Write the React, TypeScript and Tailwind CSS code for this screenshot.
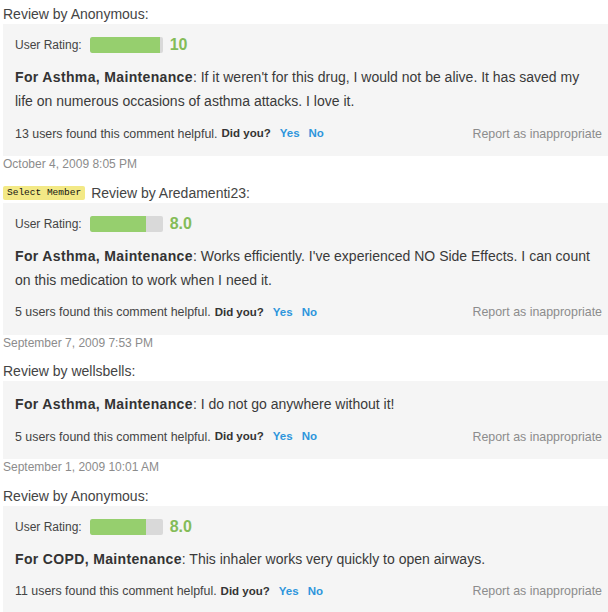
import React from 'react';

type Review = {
  author: string;
  selectMember?: boolean;
  rating?: number;
  ratingLabel?: string;
  condition: string;
  text: string;
  helpful: number;
  date?: string;
};

const reviews: Review[] = [
  {
    author: 'Anonymous',
    rating: 10,
    ratingLabel: '10',
    condition: 'For Asthma, Maintenance',
    text: "If it weren't for this drug, I would not be alive. It has saved my life on numerous occasions of asthma attacks. I love it.",
    helpful: 13,
    date: 'October 4, 2009 8:05 PM',
  },
  {
    author: 'Aredamenti23',
    selectMember: true,
    rating: 8,
    ratingLabel: '8.0',
    condition: 'For Asthma, Maintenance',
    text: "Works efficiently. I've experienced NO Side Effects. I can count on this medication to work when I need it.",
    helpful: 5,
    date: 'September 7, 2009 7:53 PM',
  },
  {
    author: 'wellsbells',
    condition: 'For Asthma, Maintenance',
    text: 'I do not go anywhere without it!',
    helpful: 5,
    date: 'September 1, 2009 10:01 AM',
  },
  {
    author: 'Anonymous',
    rating: 8,
    ratingLabel: '8.0',
    condition: 'For COPD, Maintenance',
    text: 'This inhaler works very quickly to open airways.',
    helpful: 11,
  },
];

const RatingBar: React.FC<{ rating: number; label: string }> = ({ rating, label }) => (
  <div className="flex items-center h-[20px] text-[12px] text-[#444]">
    <span>User Rating:</span>
    <div className="ml-[8px] w-[73px] h-[16px] rounded-[2px] bg-[#d9d9d9] overflow-hidden">
      <div className="h-full bg-[#96cf6e] rounded-l-[2px]" style={{ width: rating * 7 }} />
    </div>
    <span className="ml-[7px] text-[16px] font-bold text-[#84bc58]">{label}</span>
  </div>
);

const ReviewItem: React.FC<{ review: Review }> = ({ review }) => (
  <div>
    <div className="flex items-center h-[19px] text-[14px] leading-[19px] text-[#444]">
      {review.selectMember && (
        <span className="mr-[6px] px-[4px] h-[14px] leading-[14px] rounded-[2px] bg-[#f3e986] text-[#111] text-[9.5px] font-['Liberation_Mono',monospace]">
          Select Member
        </span>
      )}
      <span>Review by {review.author}:</span>
    </div>
    <div className="bg-[#f5f5f5] pl-3 pr-[6px] pt-[11px] pb-[13px]">
      {review.rating !== undefined && <RatingBar rating={review.rating} label={review.ratingLabel || ''} />}
      <p className={`mr-[7px] text-[14px] leading-[24px] text-[#3a3a3a] ${review.rating !== undefined ? 'mt-[10px]' : ''}`}>
        <span className="font-bold tracking-[0.35px] text-[#333]">{review.condition}</span>: {review.text}
      </p>
      <div className="mt-3 flex items-center justify-between h-[18px]">
        <div className="flex items-center">
          <span className="text-[12.4px] text-[#444]">{review.helpful} users found this comment helpful.</span>
          <span className="ml-[4px] text-[11.5px] font-bold text-[#333]">Did you?</span>
          <span className="ml-[9px] text-[11.5px] font-bold text-[#2e95dc]">Yes</span>
          <span className="ml-[9px] text-[11.5px] font-bold text-[#2e95dc]">No</span>
        </div>
        <span className="text-[12.4px] text-[#8c8c8c]">Report as inappropriate</span>
      </div>
    </div>
    {review.date && (
      <div className="h-[16px] leading-[16px] mb-[11.5px] text-[12px] text-[#8c8c8c]">{review.date}</div>
    )}
  </div>
);

const App: React.FC = () => {
  return (
    <div className="w-[608px] h-[612px] overflow-hidden bg-white pt-[5px] pl-[3px] font-['Liberation_Sans',Arial,sans-serif]">
      {reviews.map((r, idx) => (
        <ReviewItem key={idx} review={r} />
      ))}
    </div>
  );
};

export default App;
